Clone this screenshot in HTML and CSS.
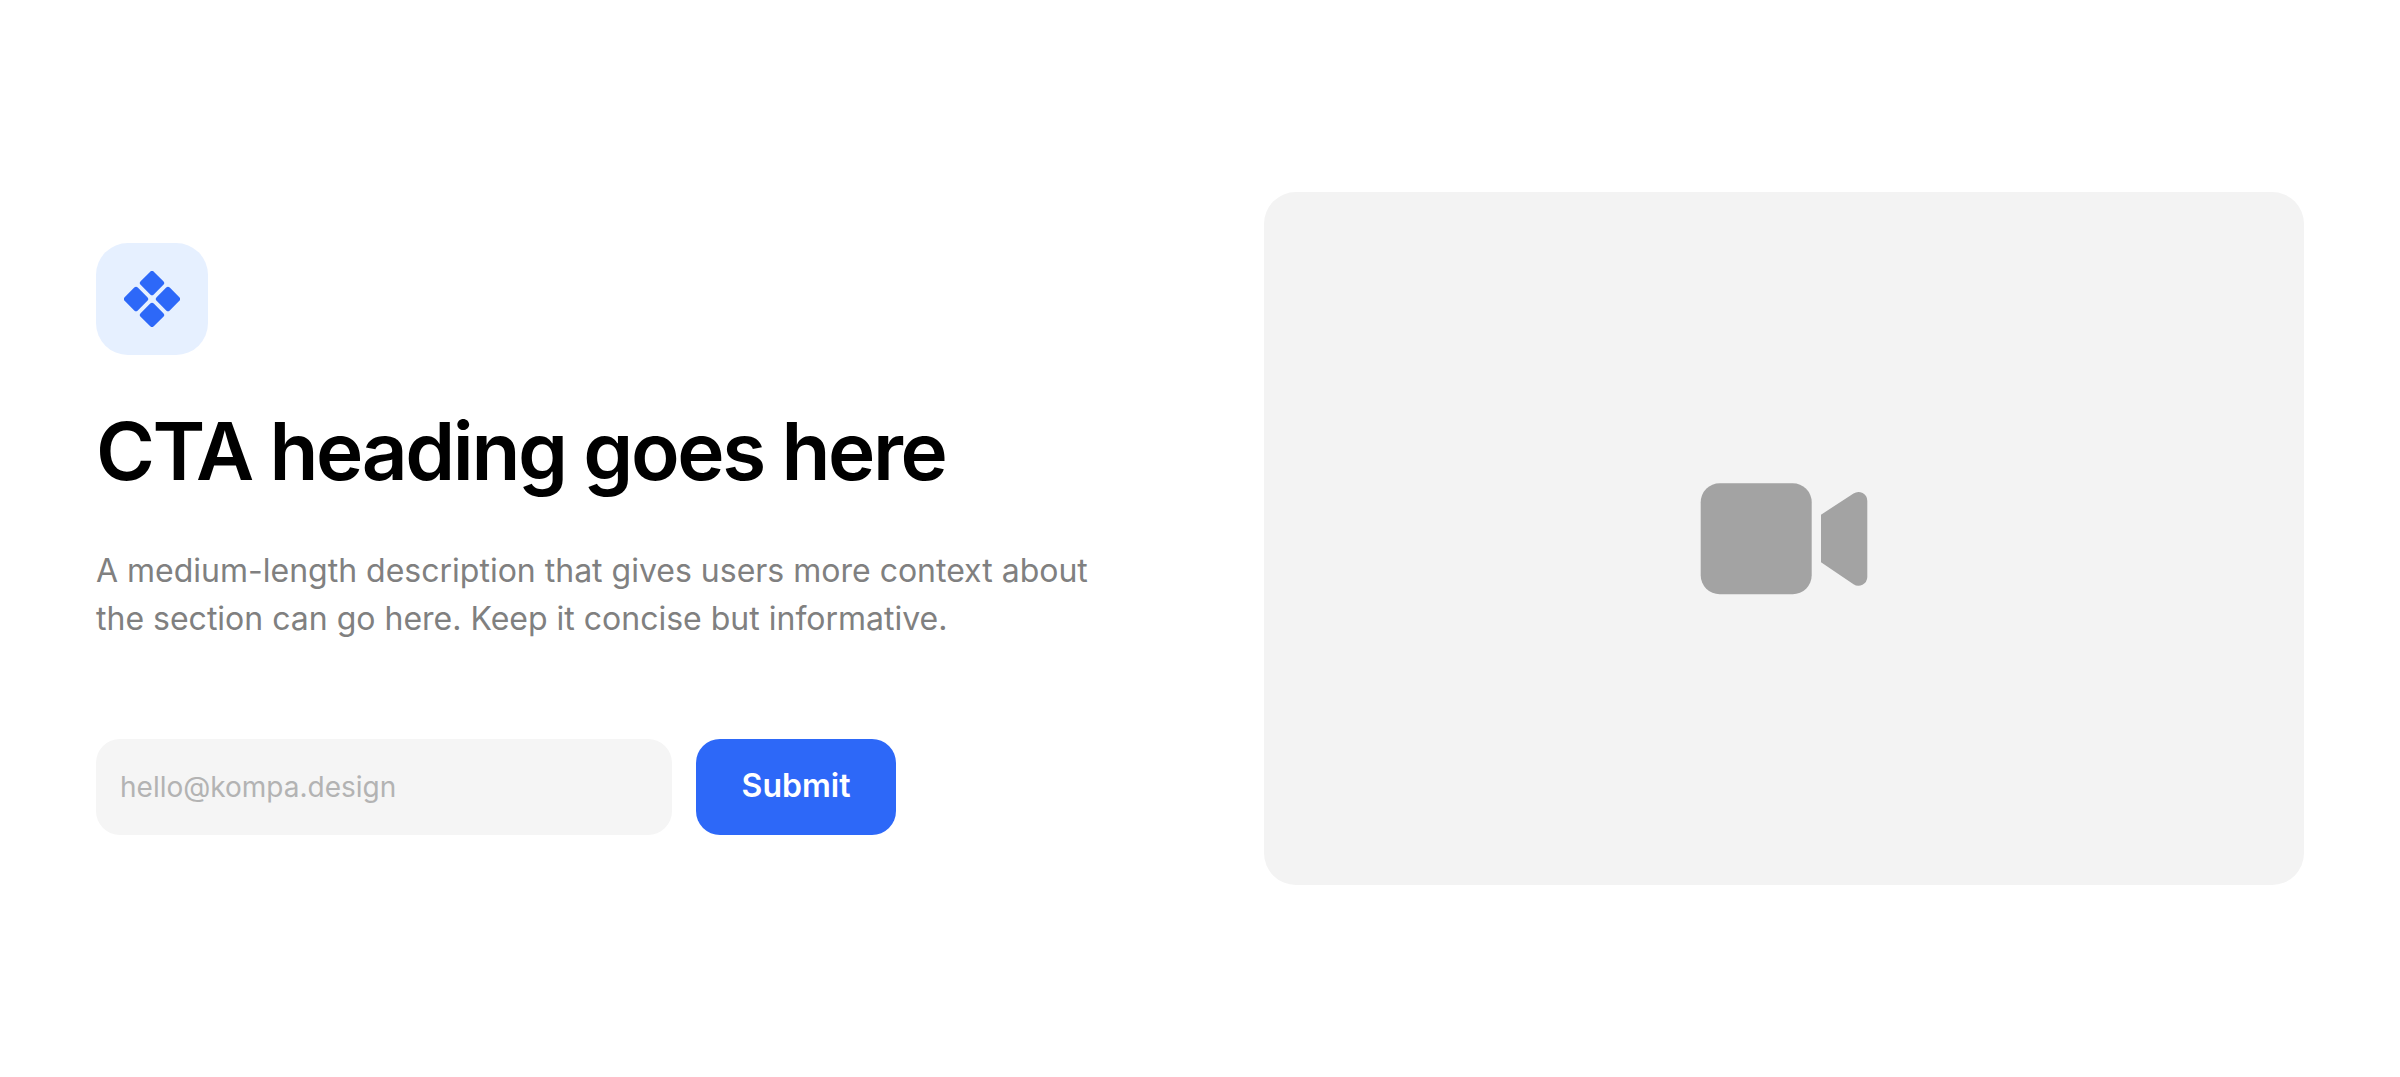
FILE: index.html
```html
<!DOCTYPE html>
<html lang="en">
<head>
    <meta charset="UTF-8">
    <meta name="viewport" content="width=device-width, initial-scale=1.0">
    <title>CTA section</title>
    <link rel="stylesheet" href="styles.css">
</head>
<body>

<section class="cta">
    <div class="cta-content">
        <div class="cta-icon">
            <svg width="56" height="56" viewBox="0 0 56 56" fill="#2d68f8" aria-hidden="true">
                <g transform="rotate(45 28 28)">
                    <rect x="7.4" y="7.4" width="18.6" height="18.6" rx="2.5"/>
                    <rect x="30" y="7.4" width="18.6" height="18.6" rx="2.5"/>
                    <rect x="7.4" y="30" width="18.6" height="18.6" rx="2.5"/>
                    <rect x="30" y="30" width="18.6" height="18.6" rx="2.5"/>
                </g>
            </svg>
        </div>
        <h1>CTA heading goes here</h1>
        <p>A medium-length description that gives users more context about the section can go here. Keep it concise but informative.</p>
        <form class="cta-form">
            <input type="email" placeholder="hello@kompa.design" aria-label="Email">
            <button type="submit">Submit</button>
        </form>
    </div>
    <div class="cta-media">
        <svg width="168" height="112" viewBox="0 0 168 112" fill="#a3a3a3" aria-hidden="true">
            <rect x="0.7" y="0.3" width="111" height="111" rx="19"/>
            <path d="M121 31.7L153.500 10.500A8.900 8.900 0 0 1 167.300 18V94A8.900 8.900 0 0 1 153.500 101.200L121 79.300Z"/>
        </svg>
    </div>
</section>

</body>
</html>
```
FILE: styles.css
```css
* {
    box-sizing: border-box;
}
body {
    margin: 0;
    font-family: Inter, "Liberation Sans", sans-serif;
    background-color: #fff;
}
.cta {
    display: grid;
    grid-template-columns: 1fr 1fr;
    gap: 128px;
    align-items: center;
    padding: 192px 96px;
}
.cta-icon {
    display: flex;
    align-items: center;
    justify-content: center;
    width: 112px;
    height: 112px;
    border-radius: 32px;
    background-color: #e6f0ff;
}
h1 {
    margin: 48px 0;
    font-size: 80px;
    font-weight: 600;
    line-height: 96px;
    letter-spacing: -0.03em;
    color: #000;
}
p {
    margin: 0 0 96px;
    font-size: 32px;
    line-height: 48px;
    color: #808080;
}
.cta-form {
    display: flex;
    gap: 24px;
}
input {
    width: 576px;
    height: 96px;
    padding: 0 24px;
    border: none;
    border-radius: 24px;
    font-family: inherit;
    font-size: 28px;
    background-color: #f5f5f5;
}
input::placeholder {
    color: #b3b3b3;
}
button {
    width: 200px;
    height: 96px;
    padding: 0 0 2px;
    border: none;
    border-radius: 24px;
    font-family: inherit;
    font-size: 32px;
    font-weight: 600;
    color: #fff;
    background-color: #2d68f8;
    cursor: pointer;
}
.cta-media {
    display: flex;
    align-items: center;
    justify-content: center;
    aspect-ratio: 3 / 2;
    border-radius: 32px;
    background-color: #f3f3f3;
}
```
